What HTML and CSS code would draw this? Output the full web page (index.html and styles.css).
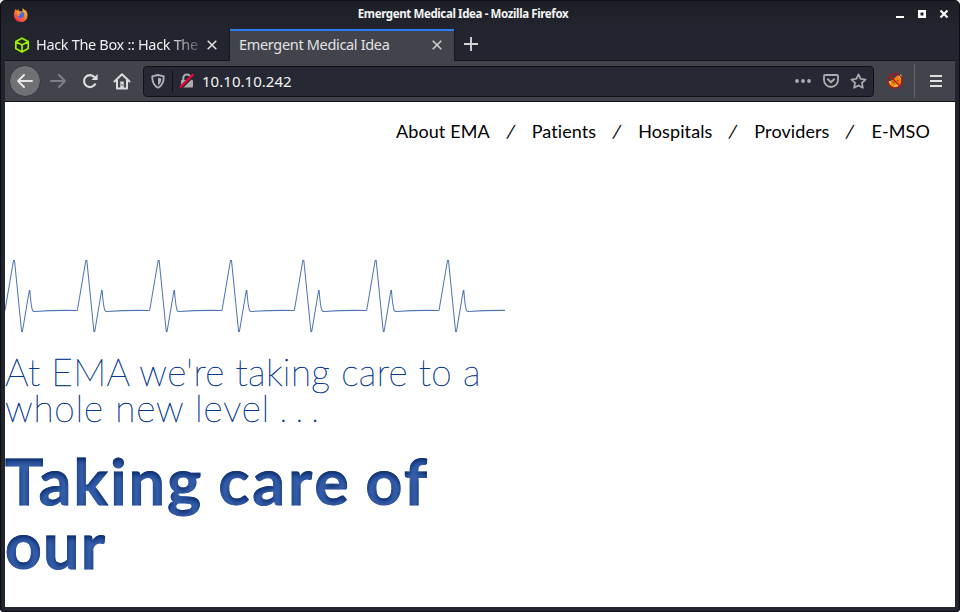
FILE: index.html
```
<!DOCTYPE html>
<html lang="en">
<head>
<meta charset="utf-8">
<title>Emergent Medical Idea</title>
<link rel="stylesheet" href="styles.css">
</head>
<body>
<svg class="defs" width="0" height="0" aria-hidden="true">
  <filter id="inset" x="-5%" y="-5%" width="110%" height="110%" color-interpolation-filters="sRGB">
    <feOffset in="SourceAlpha" dy="3" result="off"/>
    <feGaussianBlur in="off" stdDeviation="2.600" result="blur"/>
    <feComposite in="SourceAlpha" in2="blur" operator="out" result="edge"/>
    <feFlood flood-color="#00215f" flood-opacity=".85"/>
    <feComposite in2="edge" operator="in" result="shade"/>
    <feMerge><feMergeNode in="SourceGraphic"/><feMergeNode in="shade"/></feMerge>
  </filter>
</svg>
<div class="window">
  <header class="titlebar">
    <svg class="firefox" width="16" height="16" viewBox="0 0 16 16">
      <defs><linearGradient id="fire" x1="1" y1="0" x2=".3" y2="1"><stop stop-color="#ffd43b"/><stop offset=".45" stop-color="#ff8a28"/><stop offset="1" stop-color="#f12d50"/></linearGradient></defs>
      <path fill="url(#fire)" d="M2.500 2 4 3.500 5.500 2l.3 2 3.800.2L9.500 1l2.300 2.300L13 3.500c3 4.500 1.600 11.300-4.800 11.500C1.300 15-.8 8.200 2.500 2Z"/>
      <circle cx="8" cy="7.800" r="3.200" fill="#496bdc"/>
      <path fill="#ff9734" d="M3.600 4.500c1.700-.4 3.500.1 4.800 1.600L6 7.200l.6 1.700-2.200-.4Z"/>
    </svg>
    <h1 class="title">Emergent Medical Idea - Mozilla Firefox</h1>
    <svg class="controls" width="54" height="12" viewBox="0 0 54 12">
      <path fill="#fff" d="M1 9h8v2H1zM23 3h8v8h-8zm2.500 2.500v3h3v-3z" fill-rule="evenodd"/>
      <path d="m45.500 3.500 7 7m0-7-7 7" stroke="#fff" stroke-width="2"/>
    </svg>
  </header>
  <nav class="tabs">
    <div class="tab">
      <svg class="cube" width="16" height="16" viewBox="0 0 16 16" fill="none" stroke="#9fef00" stroke-width="1.700" stroke-linejoin="round"><path d="m8 1.200 6.200 3.300v7L8 14.900l-6.200-3.400v-7Zm0 13.400V8L2 4.700M8 8l6-3.300"/></svg>
      <span class="tab-label fade">Hack The Box :: Hack The</span>
      <svg class="close" width="10" height="10" viewBox="0 0 10 10"><path d="m.7.7 8.600 8.600m0-8.600L.7 9.300" stroke="#dededf" stroke-width="1.600"/></svg>
    </div>
    <div class="tab active">
      <span class="tab-label">Emergent Medical Idea</span>
      <svg class="close" width="10" height="10" viewBox="0 0 10 10"><path d="m.7.7 8.600 8.600m0-8.600L.7 9.300" stroke="#cfcfd1" stroke-width="1.600"/></svg>
    </div>
    <svg class="plus" width="14" height="14" viewBox="0 0 14 14"><path d="M0 7h14M7 0v14" stroke="#d3d3d6" stroke-width="1.900"/></svg>
  </nav>
  <div class="toolbar">
    <span class="back"><svg width="18" height="18" viewBox="0 0 18 18" fill="none" stroke="#e6e6e7" stroke-width="2" stroke-linecap="round" stroke-linejoin="round"><path d="M16 9H2m6-6L2 9l6 6"/></svg></span>
    <svg class="forward" width="18" height="18" viewBox="0 0 18 18" fill="none" stroke="#7d7f84" stroke-width="2" stroke-linecap="round" stroke-linejoin="round"><path d="M2 9h14m-6-6 6 6-6 6"/></svg>
    <svg class="reload" width="16" height="16" viewBox="0 0 16 16"><path d="M13.500 10.500A6 6 0 1 1 12.600 4.200" fill="none" stroke="#dcdcdd" stroke-width="2.200"/><path d="M15.600 1v6H9.500Z" fill="#dcdcdd"/></svg>
    <svg class="home" width="18" height="18" viewBox="0 0 18 18"><path d="m1.500 9.500 7.500-7.300 7.500 7.300M4 8v8.600h10V8" fill="none" stroke="#dcdcdd" stroke-width="2" stroke-linecap="round" stroke-linejoin="round"/><path d="M7.300 9.500h3.400v7H7.300z" fill="#dcdcdd"/><path d="M9 12v1.800" stroke="#42444b"/></svg>
    <div class="urlbar">
      <svg class="shield" width="14" height="15" viewBox="0 0 14 15"><path d="M1.200 2.300 7 1l5.800 1.300c0 5.600-1.200 9.300-5.800 11.500C2.400 11.600 1.200 7.900 1.200 2.300Z" fill="none" stroke="#b1b1b5" stroke-width="1.800" stroke-linejoin="round"/><path d="M7 3.700v7.500c2.500-1.600 3.200-3.900 3.300-6.800Z" fill="#b1b1b5"/></svg>
      <i class="split"></i>
      <svg class="lock" width="16" height="16" viewBox="0 0 16 16"><path d="M4.300 8V5a3.600 3.600 0 0 1 7.200 0v3" fill="none" stroke="#acacb0" stroke-width="2"/><rect x="2" y="7" width="12" height="7.500" rx="1" fill="#acacb0"/><path d="M1.500 15 14.800 1.700" stroke="#262833" stroke-width="3.500"/><path d="M1 14.500 14.300 1.200" stroke="#ff0039" stroke-width="2"/></svg>
      <span class="address">10.10.10.242</span>
      <svg class="dots" width="16" height="4" viewBox="0 0 16 4" fill="#acacb0"><circle cx="2" cy="2" r="1.900"/><circle cx="8" cy="2" r="1.900"/><circle cx="14" cy="2" r="1.900"/></svg>
      <svg class="pocket" width="16" height="14" viewBox="0 0 16 14" fill="none" stroke="#acacb0" stroke-linecap="round" stroke-linejoin="round"><path stroke-width="1.800" d="M2 1h12q1 0 1 1v4a7 7 0 0 1-14 0V2q0-1 1-1Z"/><path stroke-width="2" d="M4.900 5.300 8 8.200l3.100-2.900"/></svg>
      <svg class="star" width="17" height="16" viewBox="0 0 17 16"><path d="m8.500 1.300 2.100 4.600 5 .6-3.700 3.400 1 4.900-4.400-2.400-4.400 2.400 1-4.900-3.700-3.400 5-.6Z" fill="none" stroke="#acacb0" stroke-width="1.700" stroke-linejoin="round"/></svg>
    </div>
    <svg class="proxy" width="16" height="16" viewBox="0 0 16 16"><path d="M10.500 2.500 14 1.500l.3 5.500-1 5L9 14.500l-5-1.200L1 9.500l5-3Z" fill="#ef8708"/><path d="m11.500 2.500 2.800-1v5ZM1.500 8l2 .5.500 3Z" fill="#e9ded3"/><path d="m6 14.500 3-3.300 3.500 1.500Z" fill="#f7b35a"/><path d="M5.500 8.700 7.500 10m2.500-3 1.500 1" stroke="#543020"/><circle cx="8" cy="8" r="7.200" fill="none" stroke="#b80b12" stroke-width="1.200"/><path d="m3 3 10 10" stroke="#c91517" stroke-width="1.400"/></svg>
    <i class="divider"></i>
    <svg class="menu" width="12" height="12" viewBox="0 0 12 12"><path d="M0 1h12M0 6h12M0 11h12" stroke="#e0e0e1" stroke-width="2"/></svg>
  </div>
  <main class="page">
    <nav class="site-nav">
      <span>About EMA</span><span class="sep">/</span><span>Patients</span><span class="sep">/</span><span>Hospitals</span><span class="sep">/</span><span>Providers</span><span class="sep">/</span><span>E-MSO</span>
    </nav>
    <svg class="pulse" width="500" height="76" viewBox="0 0 500 76" fill="none" stroke="#5078b5" stroke-width="1.050">
      <defs><path id="beat" d="M0 52.500 8.500 2.500 9.500 2.500 16.600 73.500h.8L24.300 32.500h.5C25.500 42 26 49 27.600 52.500q.4 1 2 1Q50 52 72.330 52.500"/></defs>
      <use href="#beat"/><use href="#beat" x="72.330"/><use href="#beat" x="144.660"/><use href="#beat" x="217"/><use href="#beat" x="289.330"/><use href="#beat" x="361.660"/><use href="#beat" x="434"/>
    </svg>
    <p class="lead"><span class="lead-one">At EMA we're taking care to a</span><br><span class="lead-two">whole new level</span><span class="ellipsis"> . . .</span></p>
    <h2 class="headline"><span class="w-taking">Taking </span><span class="w-care">care </span><span class="w-of">of</span><br><span class="w-our">our</span></h2>
  </main>
</div>
</body>
</html>
```
FILE: styles.css
```
* { box-sizing: border-box; }
html { background: #fff; }
body { margin: 0; width: 960px; height: 612px; overflow: hidden; font-family: "Noto Sans", sans-serif; }
svg { display: block; flex: none; }
.defs { position: absolute; }
.window { width: 960px; height: 612px; border: 1px solid #0c0e12; border-radius: 5px 5px 3px 3px; background: #23252e; padding: 0 4px 4px; display: flex; flex-direction: column; }
.titlebar { height: 28px; flex: none; display: grid; grid-template-columns: 66px 1fr 66px; align-items: center; margin: 0 -4px; padding: 0 10px 0 12px; background: linear-gradient(#1d1f27, #23252e); border-radius: 4px 4px 0 0; }
.title { margin: 0 36px 2px 0; text-align: center; font-size: 11.500px; line-height: 16px; font-weight: 700; color: #f4f4f4; letter-spacing: -.38px; white-space: nowrap; }
.controls { margin: 0 0 4px 12px; }
.tabs { height: 32px; flex: none; display: flex; border-bottom: 1px solid #101218; }
.tab { width: 224px; height: 32px; display: flex; align-items: center; color: #eeeef0; font-size: 14.500px; letter-spacing: -.33px; padding: 0 12px 0 9px; }
.tab-label { flex: 1; white-space: nowrap; line-height: 20px; margin-bottom: 2px; }
.cube { margin-right: 6px; }
.fade { overflow: hidden; mask-image: linear-gradient(90deg, #000 132px, rgba(0,0,0,.25) 163px); }
.active { width: 226px; border: solid #15171e; border-width: 0 1px; background: #42444b; box-shadow: inset 0 2px #2d7bf5; color: #e2e2e4; }
.plus { margin: 8px 0 0 9px; }
.toolbar { height: 41px; flex: none; background: #42444b; border-bottom: 1px solid #101218; display: flex; align-items: center; padding: 0 12px 0 4px; }
.back { width: 32px; height: 32px; flex: none; border-radius: 50%; background: #707175; border: 1px solid #33353b; display: grid; place-items: center; }
.forward { margin-left: 8px; }
.reload { margin-left: 15px; }
.home { margin-left: 15px; }
.urlbar { width: 731px; height: 31px; flex: none; margin-left: 12px; border: 1px solid #0f1117; border-radius: 4px; background: #262833; display: flex; align-items: center; padding: 0 6px 0 7px; }
.split { width: 1px; height: 22px; background: #101218; margin: 0 7px; }
.lock { margin-left: -1px; }
.address { flex: 1; margin-left: 7px; color: #f4f4f5; font-size: 15px; line-height: 20px; letter-spacing: .03px; }
.pocket { margin-left: 12px; }
.star { margin-left: 11px; }
.proxy { margin-left: 13px; }
.divider { width: 1px; height: 34px; margin: 0 15px 0 11px; background: #65676c; }
.page { flex: 1; background: #fff; font-family: Lato, sans-serif; overflow: hidden; }
.site-nav { height: 58px; display: flex; justify-content: space-between; align-items: center; margin-left: 391px; width: 534px; font-size: 18px; color: #000; white-space: nowrap; letter-spacing: .1px; font-variant-ligatures: none; }
.sep { transform: skewX(-10deg); }
.pulse { margin-top: 98px; }
.lead { margin: 20px 0 0; font-size: 37px; line-height: 36px; font-weight: 200; color: #073a93; -webkit-text-stroke: .5px #073a93; white-space: nowrap; }
.lead-one { letter-spacing: .35px; }
.lead-two { letter-spacing: .8px; }
.ellipsis { letter-spacing: -1.600px; -webkit-text-stroke: 0; }
.headline { margin: 23px 0 0; font-size: 64px; line-height: 64px; font-weight: 700; color: #365fab; -webkit-text-stroke: 1px #365fab; white-space: nowrap; filter: url(#inset); }
.w-taking { letter-spacing: 2.400px; word-spacing: -3px; }
.w-care { letter-spacing: 3.200px; word-spacing: -5px; }
.w-of { letter-spacing: 2.500px; }
.w-our { letter-spacing: 1.600px; }
```
